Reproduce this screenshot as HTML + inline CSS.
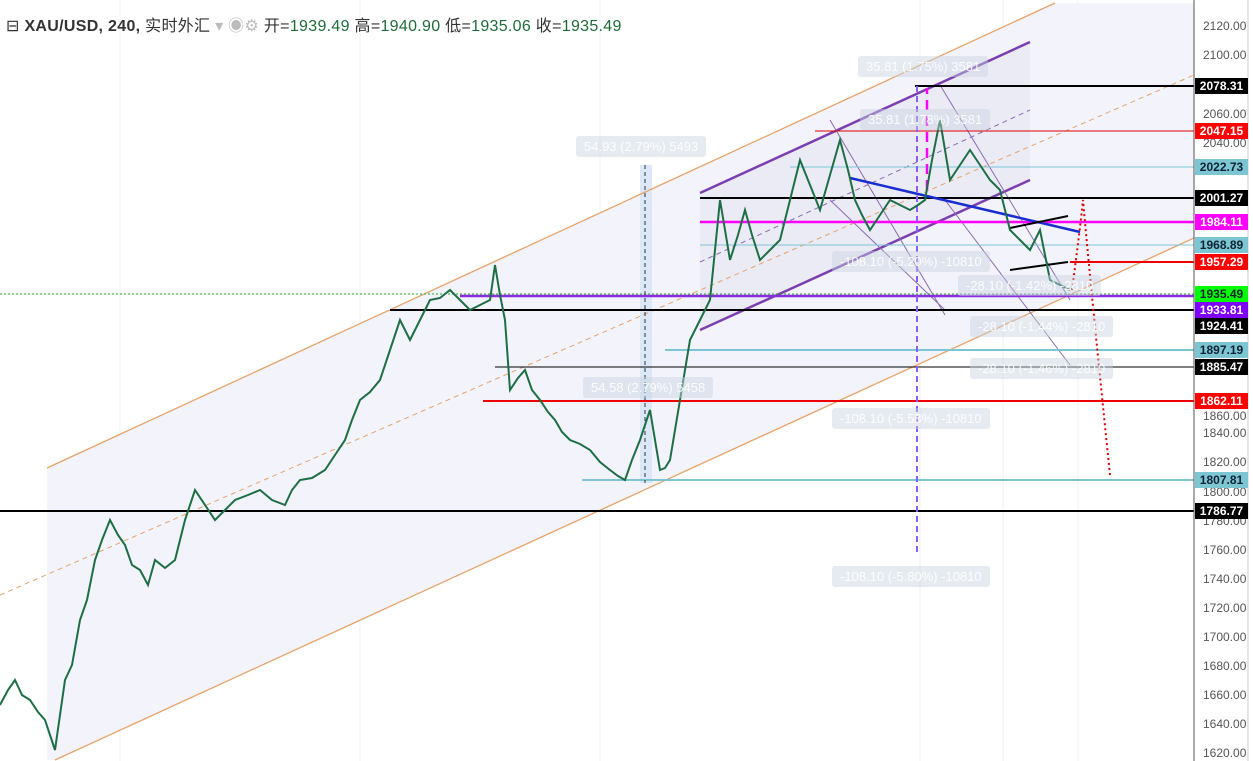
<!DOCTYPE html>
<html><head><meta charset="utf-8"><style>
body{margin:0;width:1253px;height:761px;overflow:hidden;background:#fff;font-family:"Liberation Sans","Noto Sans CJK SC",sans-serif}
.hdr{position:absolute;left:6px;top:12px;font-size:16px;color:#333;white-space:nowrap;letter-spacing:0.3px}
.hdr b{font-weight:bold;color:#333}
.g{color:#1e6b3a}
.lbl{position:absolute;left:1195px;width:53px;height:16px;font-size:12px;font-weight:bold;line-height:16px;text-align:center;color:#fff}
.ax{position:absolute;left:1203px;font-size:12px;color:#555}
.tb{position:absolute;font-size:13px;color:rgba(255,255,255,.9);background:rgba(200,210,225,.45);padding:3px 8px;border-radius:3px}
</style></head><body>
<svg width="1253" height="761" style="position:absolute;left:0;top:0">
<g stroke="#eef0f4" stroke-width="1">
<line x1="120" y1="0" x2="120" y2="761"/><line x1="360" y1="0" x2="360" y2="761"/><line x1="600" y1="0" x2="600" y2="761"/><line x1="920" y1="0" x2="920" y2="761"/><line x1="1003" y1="0" x2="1003" y2="761"/><line x1="1078" y1="0" x2="1078" y2="761"/>
</g>
<polygon points="47,468 1055,3 1194,3 1194,238 55,760 47,760" fill="#f3f3fb"/>
<polygon points="700,193 1030,42 1030,180 700,330" fill="#ebebf6"/>
<polygon points="640,165 652,165 652,483 640,483" fill="#dce8f7"/>
<line x1="47" y1="468" x2="1055" y2="3" stroke="#e6a36a" stroke-width="1.3"/>
<line x1="55" y1="760" x2="1194" y2="238" stroke="#e6a36a" stroke-width="1.3"/>
<line x1="0" y1="595" x2="1194" y2="75" stroke="#e6a36a" stroke-width="1" stroke-dasharray="5,4"/>
<line x1="700" y1="193" x2="1030" y2="42" stroke="#7b3fb0" stroke-width="2.5"/>
<line x1="700" y1="330" x2="1030" y2="180" stroke="#7b3fb0" stroke-width="2.5"/>
<line x1="700" y1="262" x2="1030" y2="110" stroke="#8a6ab0" stroke-width="1" stroke-dasharray="5,4"/>
<line x1="830" y1="120" x2="945" y2="315" stroke="#8a6ab0" stroke-width="1"/>
<line x1="940" y1="85" x2="1070" y2="300" stroke="#8a6ab0" stroke-width="1"/>
<line x1="830" y1="200" x2="945" y2="310" stroke="#8a6ab0" stroke-width="1"/>
<line x1="945" y1="200" x2="1070" y2="365" stroke="#8a6ab0" stroke-width="1"/>
<line x1="915" y1="86" x2="1194" y2="86" stroke="#000" stroke-width="2"/>
<line x1="815" y1="131" x2="1194" y2="131" stroke="#d00" stroke-width="1"/>
<line x1="790" y1="167" x2="1194" y2="167" stroke="#7cc6d4" stroke-width="1"/>
<line x1="700" y1="198" x2="1194" y2="198" stroke="#000" stroke-width="2"/>
<line x1="700" y1="222" x2="1194" y2="222" stroke="#f0f" stroke-width="2.5"/>
<line x1="700" y1="245" x2="1194" y2="245" stroke="#7cc6d4" stroke-width="1"/>
<line x1="1070" y1="262" x2="1194" y2="262" stroke="#e00" stroke-width="2"/>
<line x1="0" y1="294" x2="1194" y2="294" stroke="#2a2" stroke-width="1" stroke-dasharray="2,2"/>
<line x1="460" y1="296" x2="1194" y2="296" stroke="#8a2be2" stroke-width="2.5"/>
<line x1="390" y1="310" x2="1194" y2="310" stroke="#000" stroke-width="2"/>
<line x1="665" y1="350" x2="1194" y2="350" stroke="#7cc6d4" stroke-width="2"/>
<line x1="495" y1="367" x2="1194" y2="367" stroke="#000" stroke-width="1"/>
<line x1="483" y1="401" x2="1194" y2="401" stroke="#e00" stroke-width="2"/>
<line x1="582" y1="480" x2="1194" y2="480" stroke="#7cc6d4" stroke-width="2"/>
<line x1="0" y1="511" x2="1194" y2="511" stroke="#000" stroke-width="2"/>
<line x1="850" y1="178" x2="1080" y2="232" stroke="#1a2ed0" stroke-width="2.5"/>
<line x1="1010" y1="228" x2="1068" y2="216" stroke="#000" stroke-width="2"/>
<line x1="1010" y1="270" x2="1068" y2="262" stroke="#000" stroke-width="2"/>
<line x1="917" y1="86" x2="917" y2="556" stroke="#8b5cf6" stroke-width="2" stroke-dasharray="6,4"/>
<line x1="927" y1="190" x2="927" y2="88" stroke="#f0f" stroke-width="2.5" stroke-dasharray="10,6"/>
<line x1="645" y1="165" x2="645" y2="483" stroke="#333" stroke-width="1" stroke-dasharray="4,3"/>
<path d="M1072,290 Q1080,230 1083,200 Q1090,280 1110,475" fill="none" stroke="#d00" stroke-width="2" stroke-dasharray="2,3"/>
<polyline fill="none" stroke="#1d6e45" stroke-width="2" points="0,705 8,690 15,680 22,695 30,700 38,712 45,720 55,750 60,715 65,680 72,665 80,620 87,600 95,560 102,540 110,520 118,535 125,545 132,565 140,570 148,585 155,560 165,568 175,560 185,520 195,490 205,505 215,520 225,510 235,500 248,495 260,490 272,500 285,505 292,490 300,480 312,478 325,470 335,455 345,440 352,420 360,400 370,392 380,380 390,350 400,320 405,330 410,340 420,320 430,300 440,298 450,290 460,300 470,310 480,305 490,300 495,265 500,295 505,320 510,390 518,378 525,370 532,390 540,400 548,412 555,420 562,432 570,440 580,444 590,450 600,462 610,470 618,476 625,480 632,460 640,440 645,425 650,410 655,440 660,470 665,468 670,460 675,430 680,400 685,370 690,340 695,330 700,320 705,310 710,300 715,250 720,200 725,230 730,260 738,235 745,210 752,235 760,260 770,250 780,240 790,200 800,160 810,185 820,210 830,175 840,140 848,170 855,200 862,215 870,230 880,215 890,200 900,205 910,210 918,205 925,200 932,160 940,120 945,150 950,180 960,165 970,150 980,165 990,180 1000,190 1005,210 1010,230 1020,240 1030,250 1040,230 1045,255 1050,280 1060,285 1070,290"/>
<line x1="1194" y1="0" x2="1194" y2="761" stroke="#555"/>
<line x1="1248" y1="0" x2="1248" y2="761" stroke="#ccc"/>
</svg>
<div class="hdr">⊟ <b>XAU/USD, 240,</b> 实时外汇 <span style="color:#bbb">▾ ◉⚙</span> 开=<span class="g">1939.49</span> 高=<span class="g">1940.90</span> 低=<span class="g">1935.06</span> 收=<span class="g">1935.49</span></div>
<div class="tb" style="left:858px;top:56px">35.81 (1.75%) 3581</div>
<div class="tb" style="left:860px;top:109px">35.81 (1.78%) 3581</div>
<div class="tb" style="left:576px;top:136px">54.93 (2.79%) 5493</div>
<div class="tb" style="left:832px;top:251px">-108.10 (-5.20%) -10810</div>
<div class="tb" style="left:958px;top:275px">-28.10 (-1.42%) -2810</div>
<div class="tb" style="left:970px;top:316px">-28.10 (-1.44%) -2810</div>
<div class="tb" style="left:970px;top:358px">-28.10 (-1.46%) -2810</div>
<div class="tb" style="left:583px;top:377px">54.58 (2.79%) 5458</div>
<div class="tb" style="left:832px;top:408px">-108.10 (-5.58%) -10810</div>
<div class="tb" style="left:832px;top:566px">-108.10 (-5.80%) -10810</div>
<div class="ax" style="top:19px">2120.00</div><div class="ax" style="top:48px">2100.00</div><div class="ax" style="top:107px">2060.00</div><div class="ax" style="top:136px">2040.00</div><div class="ax" style="top:409px">1860.00</div><div class="ax" style="top:426px">1840.00</div><div class="ax" style="top:455px">1820.00</div><div class="ax" style="top:485px">1800.00</div><div class="ax" style="top:514px">1780.00</div><div class="ax" style="top:543px">1760.00</div><div class="ax" style="top:572px">1740.00</div><div class="ax" style="top:601px">1720.00</div><div class="ax" style="top:630px">1700.00</div><div class="ax" style="top:659px">1680.00</div><div class="ax" style="top:688px">1660.00</div><div class="ax" style="top:717px">1640.00</div><div class="ax" style="top:746px">1620.00</div>
<div class="lbl" style="top:78px;background:#000">2078.31</div>
<div class="lbl" style="top:123px;background:#f00">2047.15</div>
<div class="lbl" style="top:159px;background:#7cc6d4;color:#123">2022.73</div>
<div class="lbl" style="top:190px;background:#000">2001.27</div>
<div class="lbl" style="top:214px;background:#f0f">1984.11</div>
<div class="lbl" style="top:237px;background:#7cc6d4;color:#123">1968.89</div>
<div class="lbl" style="top:254px;background:#f00">1957.29</div>
<div class="lbl" style="top:286px;background:#0f0;color:#123">1935.49</div>
<div class="lbl" style="top:302px;background:#8000ff">1933.81</div>
<div class="lbl" style="top:318px;background:#000">1924.41</div>
<div class="lbl" style="top:342px;background:#7cc6d4;color:#123">1897.19</div>
<div class="lbl" style="top:359px;background:#000">1885.47</div>
<div class="lbl" style="top:393px;background:#f00">1862.11</div>
<div class="lbl" style="top:472px;background:#7cc6d4;color:#123">1807.81</div>
<div class="lbl" style="top:503px;background:#000">1786.77</div>
</body></html>
